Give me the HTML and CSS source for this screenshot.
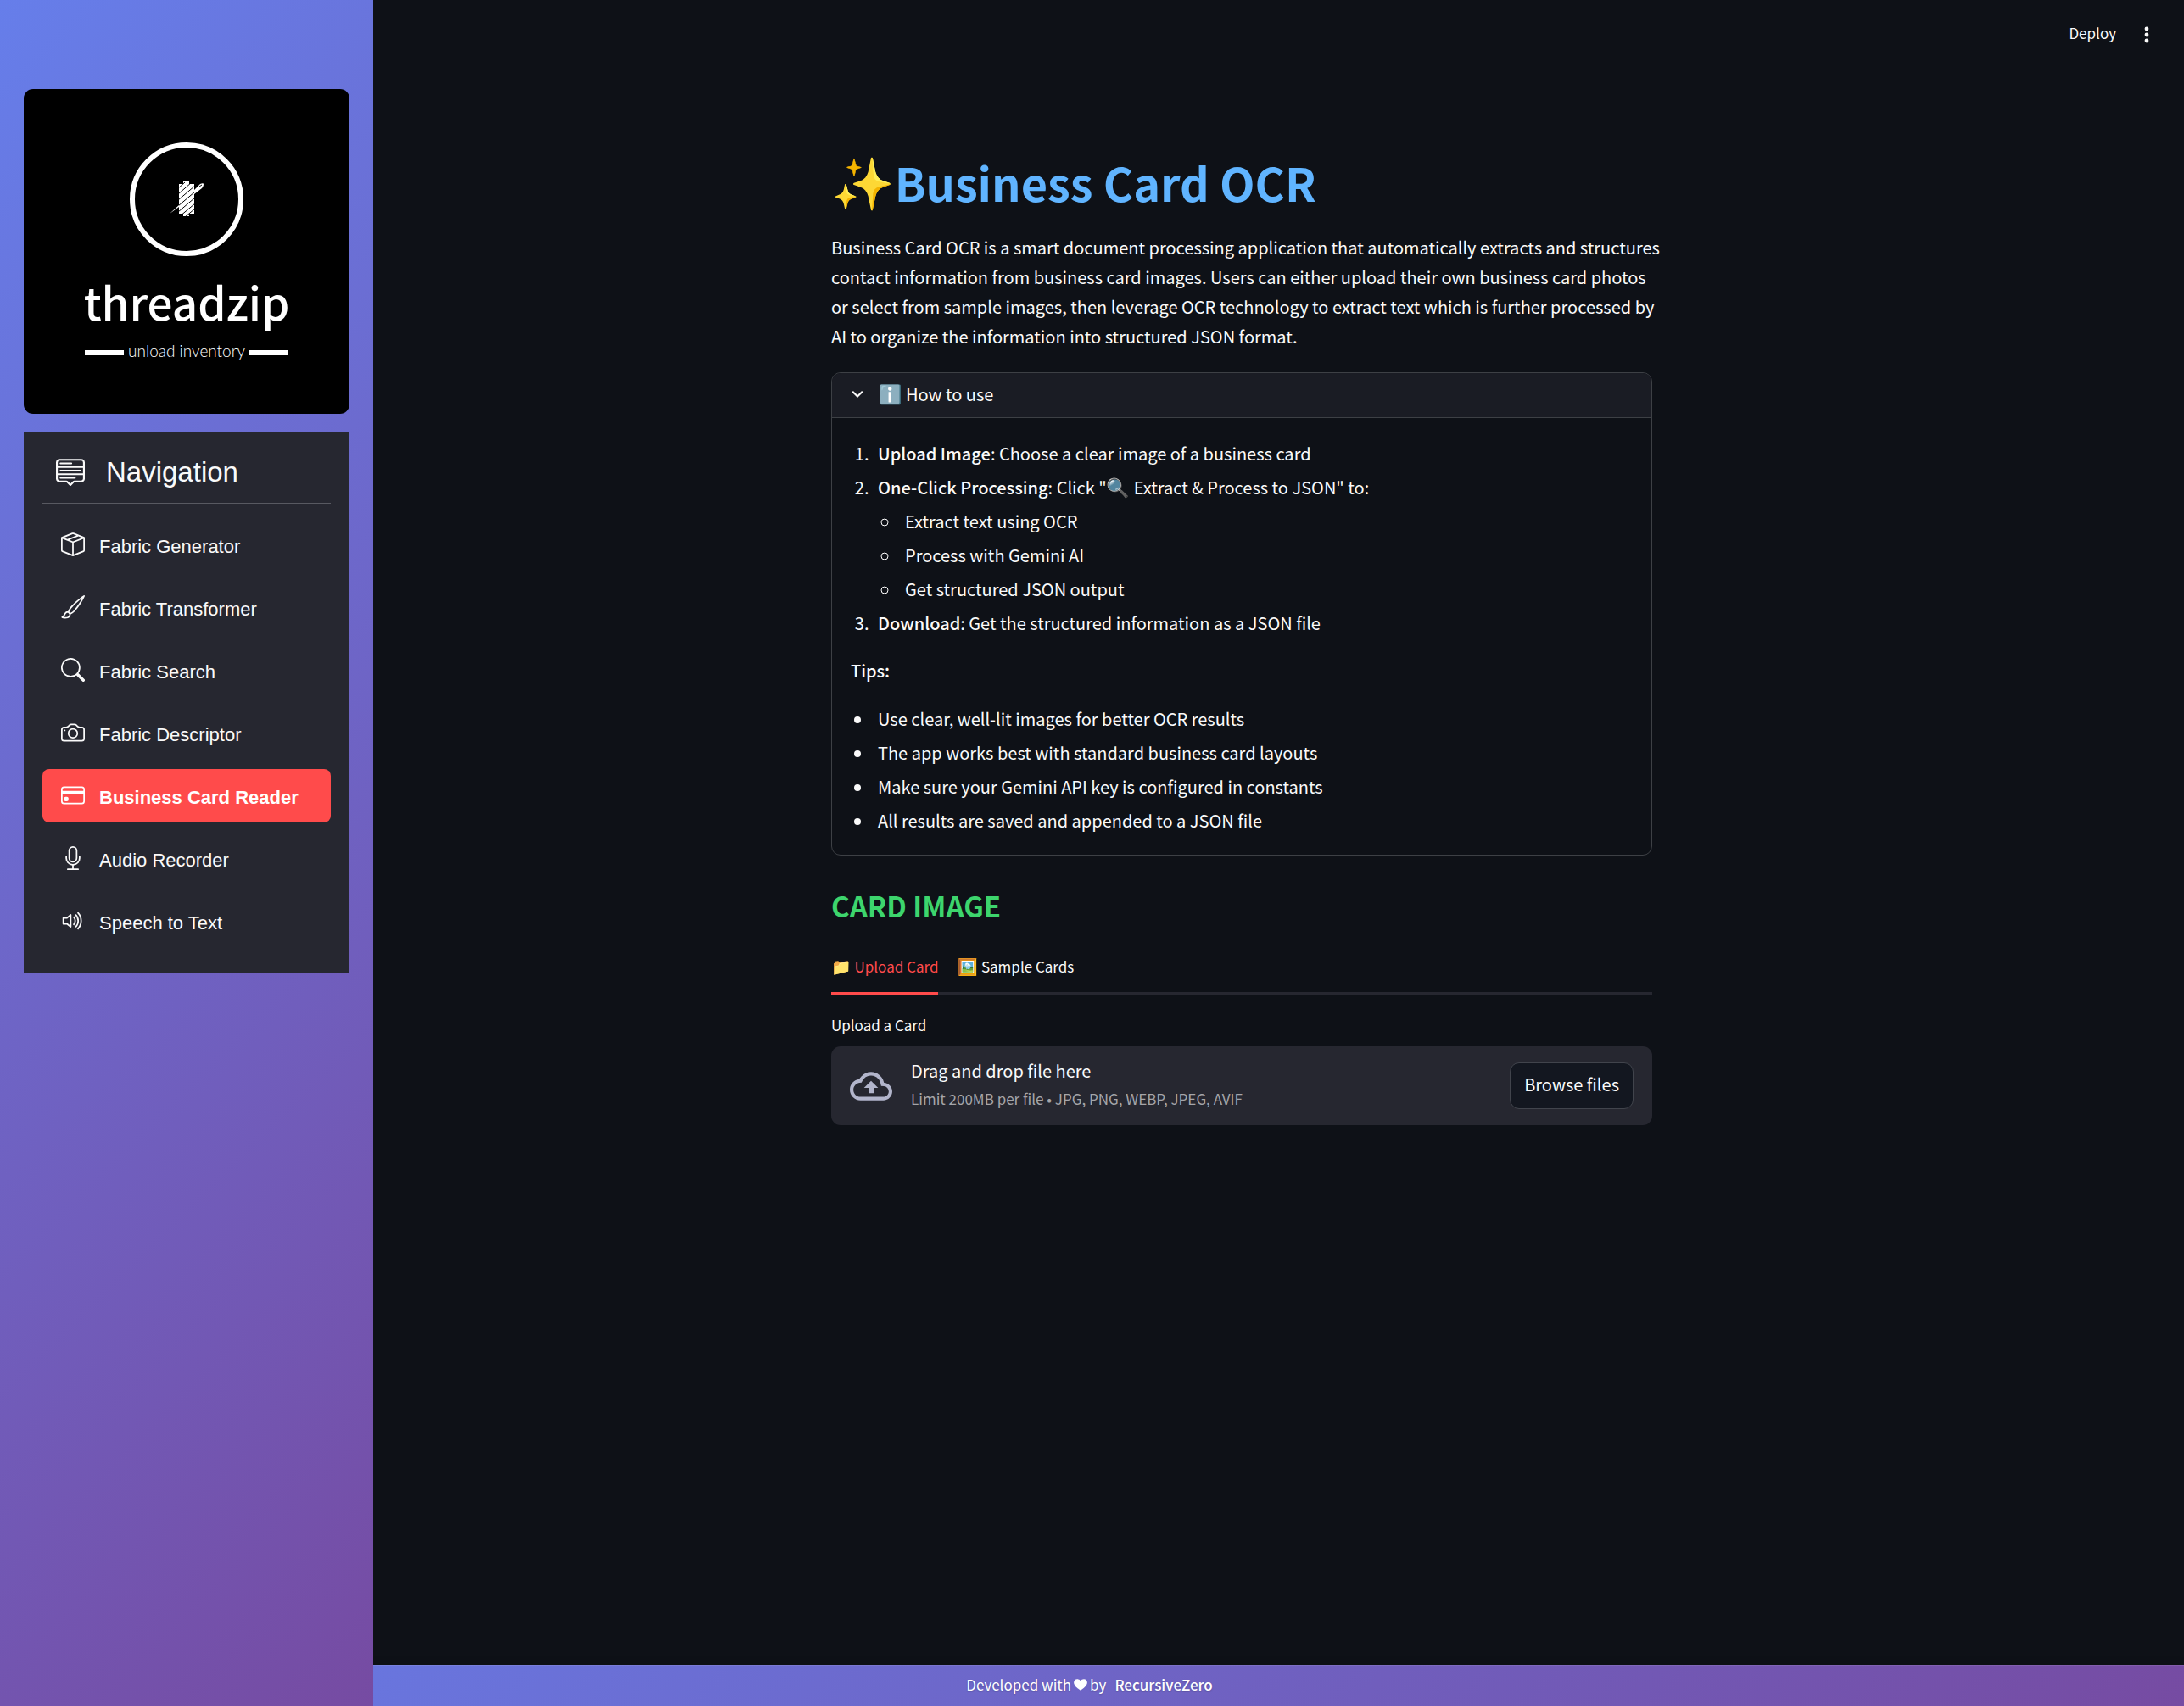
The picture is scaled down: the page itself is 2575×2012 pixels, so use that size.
FILE: index.html
```html
<!DOCTYPE html>
<html lang="en">
<head>
<meta charset="utf-8">
<meta name="viewport" content="width=device-width, initial-scale=1">
<title>Business Card OCR</title>
<link rel="stylesheet" href="styles.css">
</head>
<body>
<div class="app">
  <aside class="sidebar">
    <svg class="logo" viewBox="0 0 384 383" role="img" aria-label="threadzip unload inventory">
      <rect width="384" height="383" fill="#000"/>
      <circle cx="192" cy="130" r="64" fill="none" stroke="#fff" stroke-width="6"/>
      <path fill="#fff" d="M188 109h7v3h6v35h-6v3h-7v-3h-5v-35h5z"/>
      <path fill="none" stroke="#000" stroke-width="1" d="M182 117l8-7M182 124l16-14M182 131l20-17M182 138l20-17M182 145l20-17M184 150l18-15M190 151l12-10"/>
      <path fill="#fff" d="M172 147l11-10v2zM201 119l7-7c2-1 4-1 4 0 0 2-1 4-2 5l-9 7z"/>
      <path fill="none" stroke="#000" stroke-width="1" d="M207 115l3-2"/>
      <text class="logo-name" x="192" y="273" text-anchor="middle">threadzip</text>
      <path fill="#fff" d="M72 308h46v6H72zM266 308h46v6h-46z"/>
      <text class="logo-tag" x="192" y="316" text-anchor="middle">unload inventory</text>
    </svg>
    <nav class="menu">
      <h2 class="menu-title">
        <svg class="menu-icon" viewBox="0 0 16 16"><path d="M7.646 15.854a.5.5 0 0 0 .708 0L10.207 14H14a2 2 0 0 0 2-2V3a2 2 0 0 0-2-2H2a2 2 0 0 0-2 2v9a2 2 0 0 0 2 2h3.793l1.853 1.854zM1 9V6h14v3H1zm14 1v2a1 1 0 0 1-1 1h-3.793a1 1 0 0 0-.707.293l-1.5 1.5-1.5-1.5A1 1 0 0 0 5.793 13H2a1 1 0 0 1-1-1v-2h14zm0-5H1V3a1 1 0 0 1 1-1h12a1 1 0 0 1 1 1v2zM2 11.5a.5.5 0 0 0 .5.5h8a.5.5 0 0 0 0-1h-8a.5.5 0 0 0-.5.5zm0-4a.5.5 0 0 0 .5.5h11a.5.5 0 0 0 0-1h-11a.5.5 0 0 0-.5.5zm0-4a.5.5 0 0 0 .5.5h6a.5.5 0 0 0 0-1h-6a.5.5 0 0 0-.5.5z"/></svg>
        Navigation
      </h2>
      <ul class="menu-list">
        <li><a class="menu-link" href="#generator"><svg viewBox="0 0 16 16"><path d="M8.186 1.113a.5.5 0 0 0-.372 0L1.846 3.5l2.404.961L10.404 2l-2.218-.887zm3.564 1.426L5.596 5 8 5.961 14.154 3.5l-2.404-.961zm3.25 1.7-6.5 2.6v7.922l6.5-2.6V4.24zM7.5 14.762V6.838L1 4.239v7.923l6.5 2.6zM7.443.184a1.5 1.5 0 0 1 1.114 0l7.129 2.852A.5.5 0 0 1 16 3.5v8.662a1 1 0 0 1-.629.928l-7.185 2.874a.5.5 0 0 1-.372 0L.63 13.09a1 1 0 0 1-.63-.928V3.5a.5.5 0 0 1 .314-.464L7.443.184z"/></svg>Fabric Generator</a></li>
        <li><a class="menu-link" href="#transformer"><svg viewBox="0 0 16 16"><path d="M15.825.12a.5.5 0 0 1 .132.584c-1.53 3.43-4.743 8.17-7.095 10.64a6.067 6.067 0 0 1-2.373 1.534c-.018.227-.06.538-.16.868-.201.659-.667 1.479-1.708 1.74a8.118 8.118 0 0 1-3.078.132 3.659 3.659 0 0 1-.562-.135 1.382 1.382 0 0 1-.466-.247.714.714 0 0 1-.204-.288.622.622 0 0 1 .004-.443c.095-.245.316-.38.461-.452.394-.197.625-.453.867-.826.095-.144.184-.297.287-.472l.117-.198c.151-.255.326-.54.546-.848.528-.739 1.201-.925 1.746-.896.126.007.243.025.348.048.062-.172.142-.38.238-.608.261-.619.658-1.419 1.187-2.069 2.176-2.67 6.18-6.206 9.117-8.104a.5.5 0 0 1 .596.04zM4.705 11.912a1.23 1.23 0 0 0-.419-.1c-.246-.013-.573.05-.879.479-.197.275-.355.532-.5.777l-.105.177c-.106.181-.213.362-.32.528a3.39 3.39 0 0 1-.76.861c.69.112 1.736.111 2.657-.12.559-.139.843-.569.993-1.06a3.122 3.122 0 0 0 .126-.75l-.793-.792zm1.44.026c.12-.04.277-.1.458-.183a5.068 5.068 0 0 0 1.535-1.1c1.9-1.996 4.412-5.57 6.052-8.631-2.59 1.927-5.566 4.66-7.302 6.792-.442.543-.795 1.243-1.042 1.826-.121.288-.214.54-.275.72v.001l.575.575z"/></svg>Fabric Transformer</a></li>
        <li><a class="menu-link" href="#search"><svg viewBox="0 0 16 16"><path d="M11.742 10.344a6.5 6.5 0 1 0-1.397 1.398h-.001c.03.04.062.078.098.115l3.85 3.85a1 1 0 0 0 1.415-1.414l-3.85-3.85a1.007 1.007 0 0 0-.115-.1zM12 6.5a5.5 5.5 0 1 1-11 0 5.5 5.5 0 0 1 11 0z"/></svg>Fabric Search</a></li>
        <li><a class="menu-link" href="#descriptor"><svg viewBox="0 0 16 16"><path d="M15 12a1 1 0 0 1-1 1H2a1 1 0 0 1-1-1V6a1 1 0 0 1 1-1h1.172a3 3 0 0 0 2.12-.879l.83-.828A1 1 0 0 1 6.827 3h2.344a1 1 0 0 1 .707.293l.828.828A3 3 0 0 0 12.828 5H14a1 1 0 0 1 1 1v6zM2 4a2 2 0 0 0-2 2v6a2 2 0 0 0 2 2h12a2 2 0 0 0 2-2V6a2 2 0 0 0-2-2h-1.172a2 2 0 0 1-1.414-.586l-.828-.828A2 2 0 0 0 9.172 2H6.828a2 2 0 0 0-1.414.586l-.828.828A2 2 0 0 1 3.172 4H2z"/><path d="M8 11a2.5 2.5 0 1 1 0-5 2.5 2.5 0 0 1 0 5zm0 1a3.5 3.5 0 1 0 0-7 3.5 3.5 0 0 0 0 7zM3 6.5a.5.5 0 1 1-1 0 .5.5 0 0 1 1 0z"/></svg>Fabric Descriptor</a></li>
        <li><a class="menu-link menu-link-active" href="#reader" aria-current="page"><svg viewBox="0 0 16 16"><path d="M0 4a2 2 0 0 1 2-2h12a2 2 0 0 1 2 2v8a2 2 0 0 1-2 2H2a2 2 0 0 1-2-2V4zm2-1a1 1 0 0 0-1 1v1h14V4a1 1 0 0 0-1-1H2zm13 4H1v5a1 1 0 0 0 1 1h12a1 1 0 0 0 1-1V7z"/><path d="M2 10a1 1 0 0 1 1-1h1a1 1 0 0 1 1 1v1a1 1 0 0 1-1 1H3a1 1 0 0 1-1-1v-1z"/></svg>Business Card Reader</a></li>
        <li><a class="menu-link" href="#recorder"><svg viewBox="0 0 16 16"><path d="M3.5 6.5A.5.5 0 0 1 4 7v1a4 4 0 0 0 8 0V7a.5.5 0 0 1 1 0v1a5 5 0 0 1-4.5 4.975V15h3a.5.5 0 0 1 0 1h-7a.5.5 0 0 1 0-1h3v-2.025A5 5 0 0 1 3 8V7a.5.5 0 0 1 .5-.5z"/><path d="M10 8a2 2 0 1 1-4 0V3a2 2 0 1 1 4 0v5zM8 0a3 3 0 0 0-3 3v5a3 3 0 0 0 6 0V3a3 3 0 0 0-3-3z"/></svg>Audio Recorder</a></li>
        <li><a class="menu-link" href="#speech"><svg viewBox="0 0 16 16"><path d="M11.536 14.01A8.473 8.473 0 0 0 14.026 8a8.473 8.473 0 0 0-2.49-6.01l-.708.707A7.476 7.476 0 0 1 13.025 8c0 2.071-.84 3.946-2.197 5.303l.708.707z"/><path d="M10.121 12.596A6.48 6.48 0 0 0 12.025 8a6.48 6.48 0 0 0-1.904-4.596l-.707.707A5.483 5.483 0 0 1 11.025 8a5.483 5.483 0 0 1-1.61 3.89l.706.706z"/><path d="M10.025 8a4.486 4.486 0 0 1-1.318 3.182L8 10.475A3.489 3.489 0 0 0 9.025 8c0-.966-.392-1.841-1.025-2.475l.707-.707A4.486 4.486 0 0 1 10.025 8zM7 4a.5.5 0 0 0-.812-.39L3.825 5.5H1.5A.5.5 0 0 0 1 6v4a.5.5 0 0 0 .5.5h2.325l2.363 1.89A.5.5 0 0 0 7 12V4zM4.312 6.39 6 5.04v5.92L4.312 9.61A.5.5 0 0 0 4 9.5H2v-3h2a.5.5 0 0 0 .312-.11z"/></svg>Speech to Text</a></li>
      </ul>
    </nav>
  </aside>

  <div class="page">
    <header class="toolbar">
      <button class="toolbar-button" type="button">Deploy</button>
      <button class="toolbar-button" type="button" aria-label="Main menu">
        <svg class="dots" viewBox="0 0 28 28"><circle cx="14" cy="9" r="2.4"/><circle cx="14" cy="16" r="2.4"/><circle cx="14" cy="23" r="2.4"/></svg>
      </button>
    </header>

    <main class="content">
      <h1 class="title"><span class="title-emoji">✨</span><span class="title-text">Business Card OCR</span></h1>
      <p class="intro">Business Card OCR is a smart document processing application that automatically extracts and structures contact information from business card images. Users can either upload their own business card photos or select from sample images, then leverage OCR technology to extract text which is further processed by AI to organize the information into structured JSON format.</p>

      <details class="expander" open>
        <summary class="expander-head">
          <svg class="chevron" viewBox="0 0 24 24"><path d="M5 8l7 7 7-7" fill="none" stroke="currentColor" stroke-width="2.600"/></svg>
          <span><span class="emoji">ℹ️</span> How to use</span>
        </summary>
        <div class="expander-body">
          <ol class="list">
            <li><strong>Upload Image</strong>: Choose a clear image of a business card</li>
            <li><strong>One-Click Processing</strong>: Click "<span class="emoji">🔍</span> Extract &amp; Process to JSON" to:
              <ul class="list">
                <li>Extract text using OCR</li>
                <li>Process with Gemini AI</li>
                <li>Get structured JSON output</li>
              </ul>
            </li>
            <li><strong>Download</strong>: Get the structured information as a JSON file</li>
          </ol>
          <p class="tips"><strong>Tips:</strong></p>
          <ul class="list">
            <li>Use clear, well-lit images for better OCR results</li>
            <li>The app works best with standard business card layouts</li>
            <li>Make sure your Gemini API key is configured in constants</li>
            <li>All results are saved and appended to a JSON file</li>
          </ul>
        </div>
      </details>

      <h2 class="section-title">CARD IMAGE</h2>

      <div class="tabs" role="tablist">
        <button class="tab tab-active" type="button" role="tab" aria-selected="true"><span class="tab-emoji">📁</span> Upload Card</button>
        <button class="tab" type="button" role="tab" aria-selected="false"><span class="tab-emoji">🖼️</span> Sample Cards</button>
      </div>

      <label class="field-label" for="card-file">Upload a Card</label>
      <div class="uploader">
        <input class="file-input" id="card-file" type="file" accept=".jpg,.png,.webp,.jpeg,.avif">
        <svg class="cloud" viewBox="0 0 24 24"><path d="M19.35 10.04A7.49 7.49 0 0012 4C9.11 4 6.6 5.64 5.35 8.04A5.994 5.994 0 000 14c0 3.31 2.69 6 6 6h13c2.76 0 5-2.24 5-5 0-2.64-2.05-4.78-4.65-4.96zM19 18H6c-2.21 0-4-1.79-4-4 0-2.05 1.53-3.76 3.56-3.97l1.07-.11.5-.95A5.469 5.469 0 0112 6c2.62 0 4.88 1.86 5.39 4.43l.3 1.5 1.53.11A2.98 2.98 0 0122 15c0 1.65-1.35 3-3 3zM8 13h2.55v3h2.9v-3H16l-4-4z"/></svg>
        <div class="uploader-text">
          <span>Drag and drop file here</span>
          <small class="limit">Limit 200MB per file • JPG, PNG, WEBP, JPEG, AVIF</small>
        </div>
        <button class="browse" type="button">Browse files</button>
      </div>
    </main>
  </div>

  <footer class="footer">
    <span>Developed with</span>
    <svg class="heart" viewBox="0 0 16 14" role="img" aria-label="love"><path d="M8 13C5 11 1 8 1 4.600 1 2.500 2.500 1 4.500 1 6 1 7.300 1.700 8 3c.7-1.300 2-2 3.500-2C13.500 1 15 2.500 15 4.600 15 8 11 11 8 13z"/></svg>
    <span>by</span>
    <a class="author" href="#recursivezero">RecursiveZero</a>
  </footer>
</div>
</body>
</html>
```
FILE: styles.css
```css
* {
  box-sizing: border-box;
}

body {
  margin: 0;
  background: #0e1117;
  color: #fafafa;
  font: 20px/35px "Noto Sans CJK JP", "Noto Color Emoji", sans-serif;
}

h1, h2, p, ul, ol {
  margin: 0;
}

button {
  font: inherit;
  color: inherit;
  cursor: pointer;
}

strong {
  font-weight: 500;
}

.app {
  display: grid;
  grid-template-columns: 440px 1fr;
  grid-template-rows: 1fr auto;
  min-height: 100vh;
}

/* Sidebar */

.sidebar {
  grid-area: 1 / 1 / 3 / 2;
  z-index: 1;
  display: flex;
  flex-direction: column;
  gap: 22px;
  padding: 105px 28px 28px;
  background: linear-gradient(135deg, #667eea 0%, #764ba2 100%);
}

.logo {
  display: block;
  width: 100%;
  border-radius: 11px;
}

.logo-name {
  fill: #fff;
  font-size: 53px;
  font-weight: 500;
}

.logo-tag {
  fill: #fff;
  font: 300 19px Lato, sans-serif;
}

.menu {
  padding: 22px;
  background: #262730;
  font-family: "Liberation Sans", Arial, sans-serif;
}

.menu-title {
  display: flex;
  align-items: center;
  gap: 25px;
  height: 62px;
  margin-bottom: 17px;
  padding: 0 16px 13px;
  border-bottom: 1px solid #585961;
  font-size: 33px;
  font-weight: 400;
}

.menu-icon {
  width: 34px;
  height: 34px;
  fill: currentColor;
}

.menu-list {
  display: flex;
  flex-direction: column;
  gap: 11px;
  padding: 0 0 7px;
  list-style: none;
}

.menu-link {
  display: flex;
  align-items: center;
  gap: 17px;
  height: 63px;
  padding: 3px 22px 0;
  border-radius: 8px;
  color: #fafafa;
  font-size: 22px;
  text-decoration: none;
}

.menu-link svg {
  width: 28px;
  height: 28px;
  margin-bottom: 5px;
  fill: currentColor;
}

.menu-link-active {
  background: #ff4b4b;
  color: #fff;
  font-weight: 700;
}

/* Page */

.page {
  grid-area: 1 / 2 / 2 / 3;
}

.toolbar {
  display: flex;
  justify-content: flex-end;
  align-items: center;
  gap: 22px;
  height: 78px;
  padding: 0 30px;
}

.toolbar-button {
  display: flex;
  padding: 0;
  border: 0;
  background: none;
  font-size: 17px;
  line-height: 26px;
}

.dots {
  width: 28px;
  height: 28px;
  fill: currentColor;
}

.content {
  max-width: 1055px;
  margin: 0 auto;
  padding: 101px 87px 160px 0;
}

.title {
  margin-bottom: 23px;
  font-size: 54px;
  font-weight: 700;
  line-height: 72px;
}

.title-emoji {
  font-size: 60px;
  line-height: 1;
}

.title-text {
  color: #60b4ff;
}

.emoji {
  font-size: 22px;
  line-height: 1;
}

/* The text block may run slightly past the column edge */
.intro {
  margin: 0 -12px 25px 0;
}

.expander {
  margin-bottom: 36px;
  border: 1px solid #3d4045;
  border-radius: 11px;
  overflow: hidden;
}

.expander-head {
  display: flex;
  align-items: center;
  gap: 15px;
  height: 53px;
  padding: 0 20px 3px;
  border-bottom: 1px solid #3d4045;
  background: #1a1c24;
  list-style: none;
  cursor: pointer;
}

.chevron {
  width: 20px;
  height: 20px;
}

.expander-body {
  padding: 24px 22px 23px;
}

.list {
  display: flex;
  flex-direction: column;
  gap: 5px;
  padding-left: 26px;
}

.list li {
  padding-left: 6px;
}

.list .list {
  padding-top: 5px;
}

.tips {
  padding: 21px 0 22px;
}

.section-title {
  margin-bottom: 36px;
  color: #3dd56d;
  font-size: 33px;
  font-weight: 700;
  line-height: 46px;
}

.tabs {
  display: flex;
  gap: 23px;
  margin-bottom: 23px;
  box-shadow: inset 0 -3px #262730;
}

.tab {
  padding: 0 0 17px;
  border: 0;
  border-bottom: 3px solid transparent;
  background: none;
  font-size: 17px;
  line-height: 26px;
}

.tab-active {
  border-color: #ff4b4b;
  color: #ff4b4b;
}

.tab-emoji {
  font-size: 19px;
  line-height: 1;
}

.field-label {
  display: block;
  margin-bottom: 12px;
  font-size: 17px;
  line-height: 26px;
}

.uploader {
  display: flex;
  align-items: center;
  gap: 22px;
  padding: 15px 22px;
  border-radius: 11px;
  background: #262730;
}

.file-input {
  display: none;
}

.cloud {
  width: 50px;
  height: 50px;
  fill: #b2b5cb;
}

.uploader-text {
  display: flex;
  flex: 1;
  flex-direction: column;
  gap: 9px;
  padding-bottom: 6px;
  line-height: 28px;
}

.limit {
  color: #a5a5a9;
  font-size: 17px;
  line-height: 20px;
}

.browse {
  height: 55px;
  padding: 0 16px 4px;
  border: 1px solid #41444c;
  border-radius: 11px;
  background: #131720;
}

/* Footer */

.footer {
  grid-area: 2 / 1 / 3 / 3;
  display: flex;
  justify-content: center;
  align-items: center;
  gap: 2px;
  height: 48px;
  padding: 0 6px 4px 0;
  border-top: 1px solid rgba(255, 255, 255, 0.1);
  background: linear-gradient(135deg, #667eea 0%, #764ba2 100%);
  box-shadow: 0 -2px 10px rgba(0, 0, 0, 0.1);
  color: #fff;
  font-size: 17px;
  line-height: 26px;
  text-shadow: 0 1px 2px rgba(0, 0, 0, 0.2);
}

.heart {
  width: 18px;
  height: 16px;
  fill: currentColor;
}

.author {
  margin-left: 8px;
  color: inherit;
  font-weight: 500;
  text-decoration: none;
}
```
